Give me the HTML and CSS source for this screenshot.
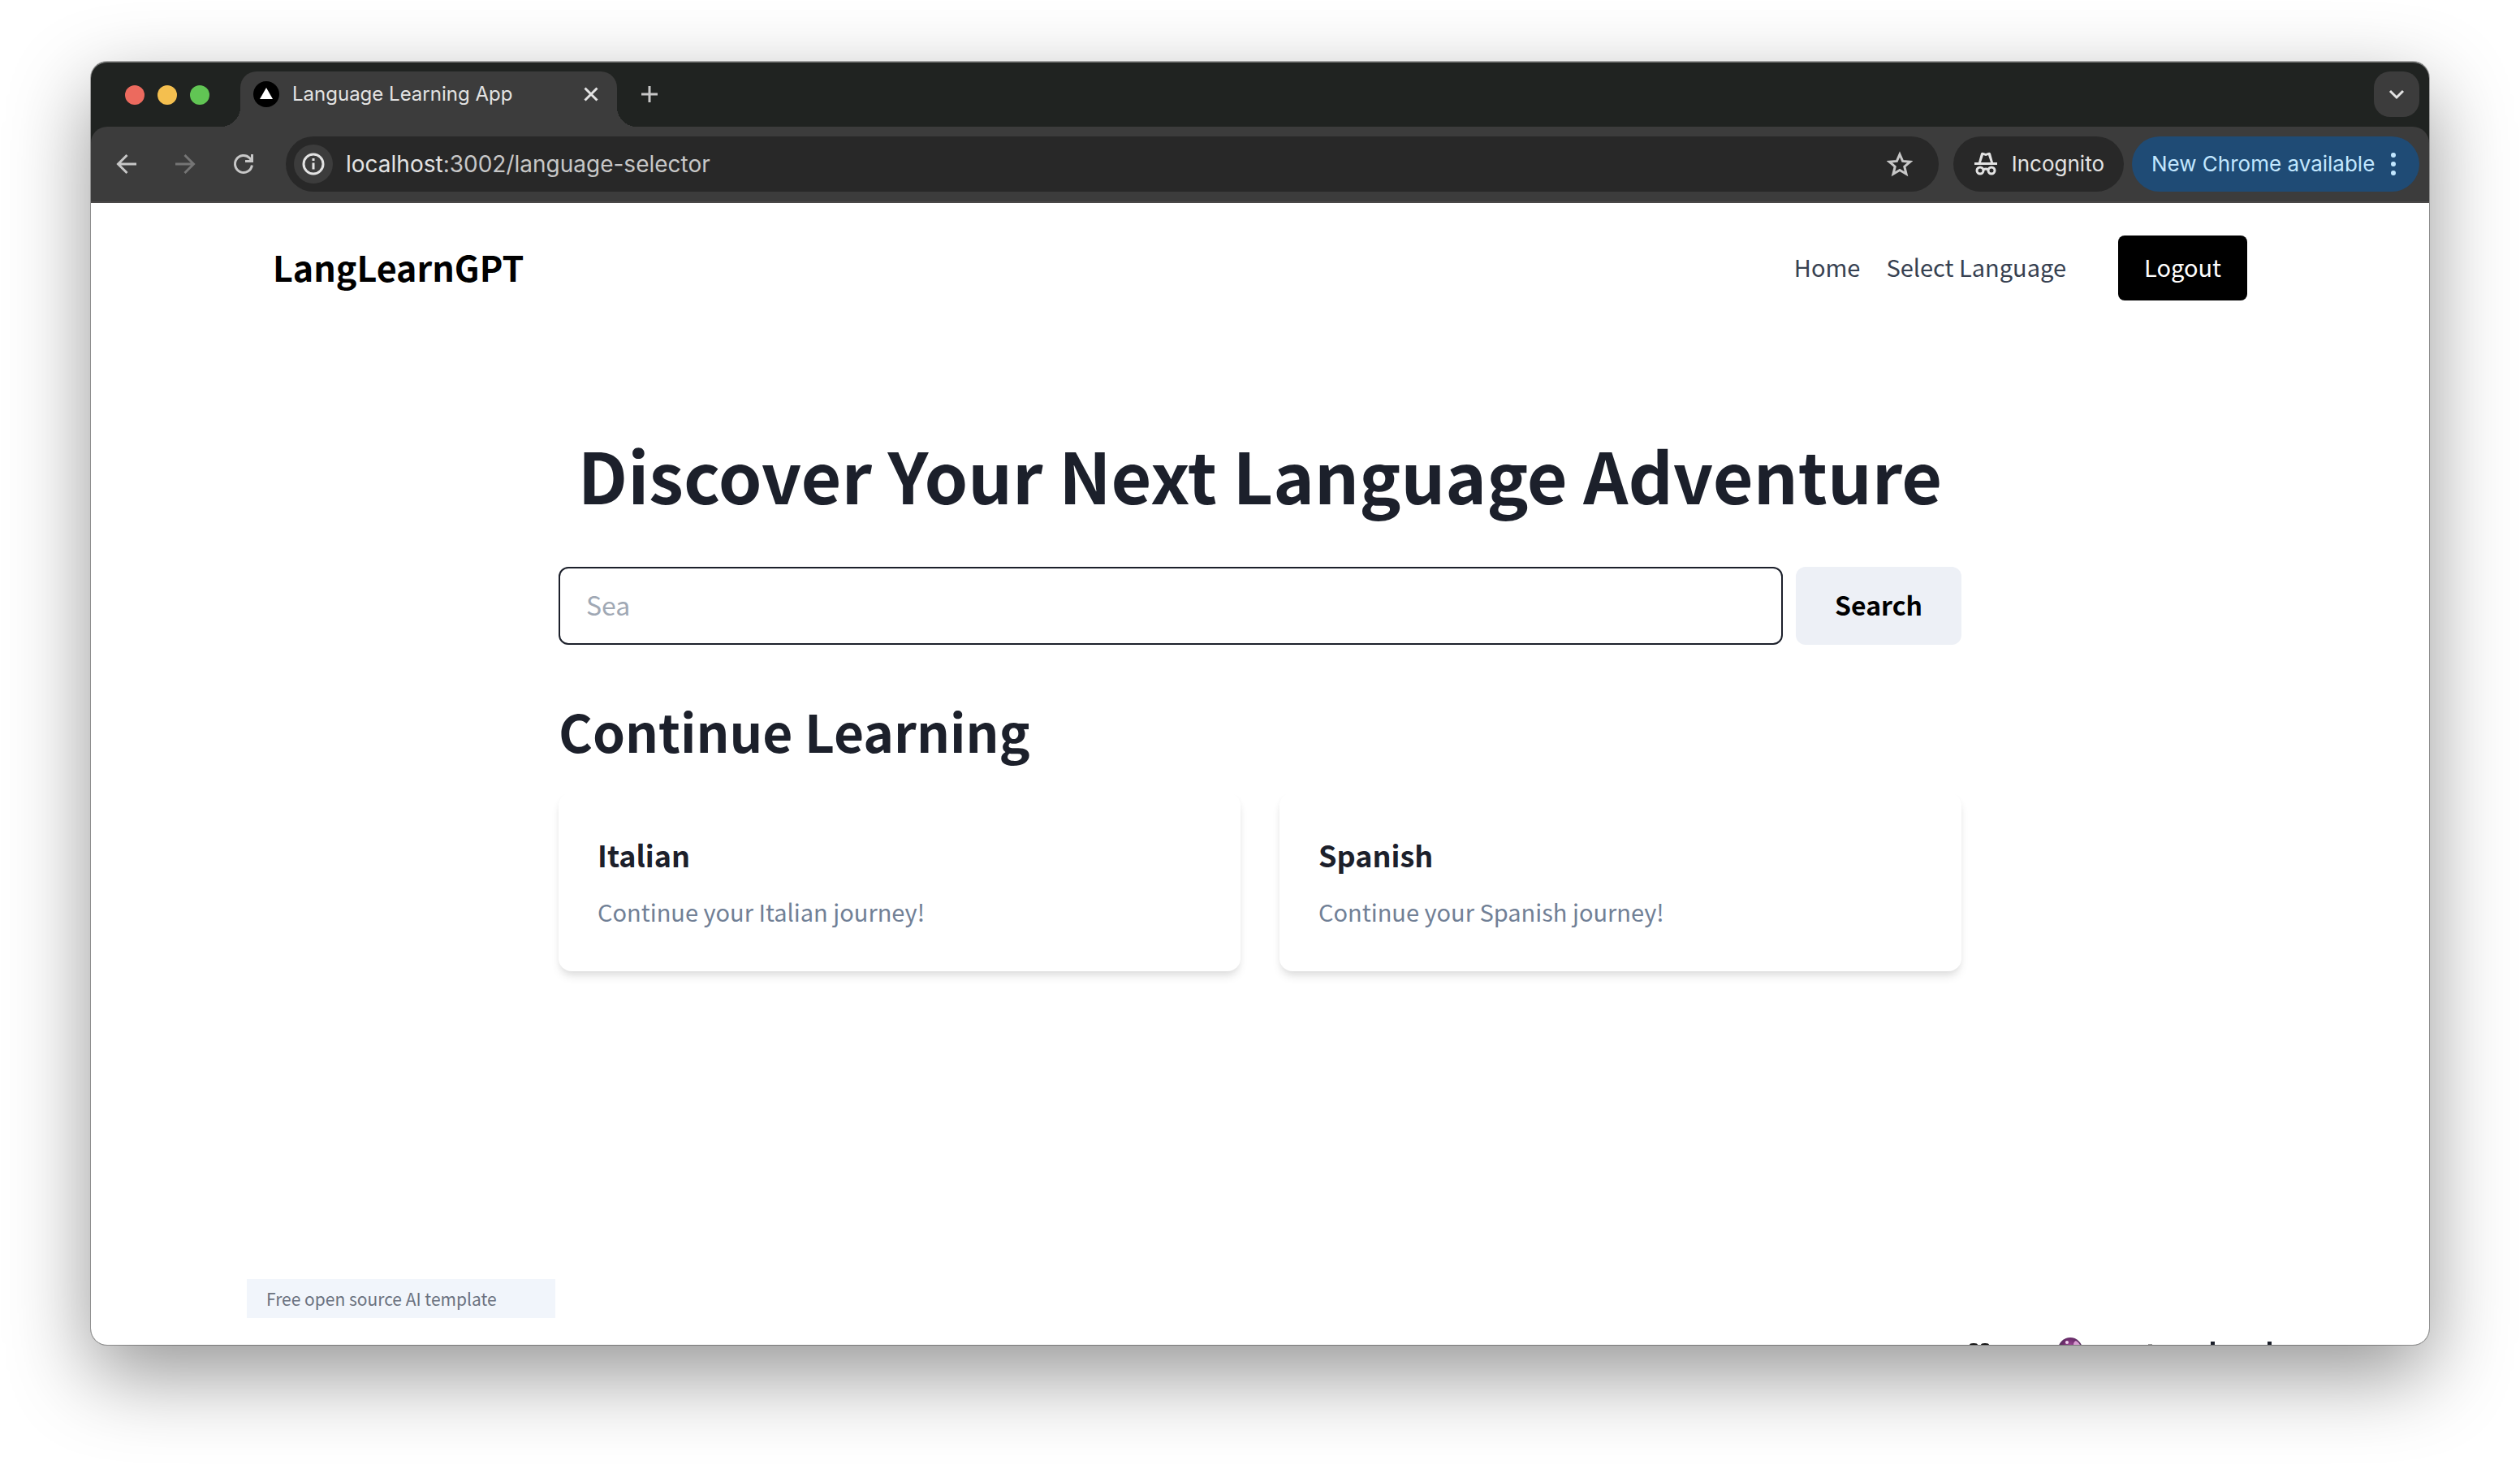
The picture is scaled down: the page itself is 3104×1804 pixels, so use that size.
FILE: index.html
```html
<!DOCTYPE html>
<html lang="en">
<head>
<meta charset="utf-8">
<title>Language Learning App</title>
<link rel="stylesheet" href="styles.css">
</head>
<body>
<div class="window">
  <div class="tab-strip">
    <div class="lights"><span class="light red"></span><span class="light yellow"></span><span class="light green"></span></div>
    <div class="tab">
      <svg class="favicon" viewBox="0 0 32 32" aria-hidden="true"><circle cx="16" cy="16" r="16" fill="#000"/><path d="M16 8l8 14H8z" fill="#fff"/></svg>
      <span class="tab-title">Language Learning App</span>
      <button class="icon-button" aria-label="Close tab"><svg class="icon-small" viewBox="0 0 24 24"><path d="M4.500 4.500l15 15M19.500 4.500l-15 15" stroke="#e3e3e3" stroke-width="3"/></svg></button>
    </div>
    <button class="icon-button new-tab" aria-label="New tab"><svg class="icon-small" viewBox="0 0 24 24"><path d="M12 2v20M2 12h20" stroke="#c7c7c7" stroke-width="3"/></svg></button>
    <button class="icon-button tab-search" aria-label="Search tabs"><svg class="icon-small" viewBox="0 0 24 24"><path d="M4 8l8 8 8-8" fill="none" stroke="#e3e3e3" stroke-width="3"/></svg></button>
  </div>
  <div class="toolbar">
    <div class="history">
      <button class="icon-button" aria-label="Back"><svg class="icon" viewBox="0 0 32 32"><path d="M28 16H6M16.500 5L5.500 16l11 11" fill="none" stroke="#c7c7c7" stroke-width="3"/></svg></button>
      <button class="icon-button" aria-label="Forward"><svg class="icon" viewBox="0 0 32 32"><path d="M4 16h22M15.500 5l11 11-11 11" fill="none" stroke="#757575" stroke-width="3"/></svg></button>
      <button class="icon-button" aria-label="Reload"><svg class="icon" viewBox="0 0 32 32"><path d="M26.400 17.500a10.500 10.500 0 1 1-3-9L26 11.500M26.500 4v8.500H18" fill="none" stroke="#c7c7c7" stroke-width="3"/></svg></button>
    </div>
    <div class="address">
      <button class="icon-button site-info" aria-label="Site information"><svg class="icon" viewBox="0 0 32 32"><circle cx="16" cy="16" r="12" fill="none" stroke="#e3e3e3" stroke-width="3"/><path d="M16 14.500v8M16 9v3" stroke="#e3e3e3" stroke-width="3"/></svg></button>
      <span class="url"><span class="host">localhost</span>:3002/language-selector</span>
      <button class="icon-button" aria-label="Bookmark"><svg class="icon" viewBox="0 0 32 32"><path d="M16 4l3.600 8.400 9.200.8-7 6 2.200 9L16 23.400 8 28.200l2.200-9-7-6 9.200-.8z" fill="none" stroke="#c7c7c7" stroke-width="3"/></svg></button>
    </div>
    <button class="pill incognito"><svg class="icon" viewBox="0 0 32 32"><path d="M2 14h28v3H2zM7 14L10 3q1-2 3-1l3 1 3-1q2-1 3 1l3 11h-3L19 5l-3 1-3-1-3 9z" fill="#e3e3e3"/><circle cx="9" cy="24" r="4" fill="none" stroke="#e3e3e3" stroke-width="3"/><circle cx="23" cy="24" r="4" fill="none" stroke="#e3e3e3" stroke-width="3"/><path d="M13 23q3-2 6 0" fill="none" stroke="#e3e3e3" stroke-width="3"/></svg>Incognito</button>
    <button class="pill update">New Chrome available<svg class="dots" viewBox="0 0 8 32"><circle cx="4" cy="5" r="3"/><circle cx="4" cy="16" r="3"/><circle cx="4" cy="27" r="3"/></svg></button>
  </div>
  <div class="page">
    <header class="site-header">
      <a class="brand" href="#">LangLearnGPT</a>
      <nav class="nav"><a href="#">Home</a><a href="#">Select Language</a></nav>
      <button class="logout">Logout</button>
    </header>
    <main class="main">
      <h1>Discover Your Next Language Adventure</h1>
      <form class="search">
        <input class="search-input" type="text" placeholder="Sea" aria-label="Search languages">
        <button class="search-button" type="button">Search</button>
      </form>
      <h2>Continue Learning</h2>
      <div class="cards">
        <a class="card" href="#"><h3>Italian</h3><p>Continue your Italian journey!</p></a>
        <a class="card" href="#"><h3>Spanish</h3><p>Continue your Spanish journey!</p></a>
      </div>
    </main>
    <footer class="site-footer">
      <span class="badge">Free open source AI template</span>
      <svg class="credits" viewBox="0 0 380 9" aria-hidden="true">
        <defs><radialGradient id="orb" cx=".5" cy=".35" r=".5"><stop offset="0" stop-color="#a24a9a"/><stop offset=".6" stop-color="#6d2c6c"/><stop offset="1" stop-color="#4c3558"/></radialGradient></defs>
        <ellipse cx="11" cy="9" rx="5" ry="2" fill="#111"/><ellipse cx="25" cy="9" rx="5" ry="2" fill="#111"/>
        <circle cx="130" cy="15" r="15" fill="url(#orb)"/><circle cx="126" cy="6" r="2" fill="#f3d6f0"/><path d="M134 9q0-4 3-5 4 2 5 5z" fill="#d79bd0"/>
        <path d="M226 8h5v1h-5z" fill="#999"/><path d="M303 5h5v4h-5zM373 5h5v4h-5z" fill="#1c202b"/>
      </svg>
    </footer>
  </div>
</div>
</body>
</html>
```
FILE: styles.css
```css
* { box-sizing: border-box; }
body { margin: 0; height: 100vh; padding: 76px 112px 148px; display: flex; background: #fff; font-family: "Noto Sans CJK SC", sans-serif; font-size: 29px; line-height: 48px; color: #1c202b; }
button, input { font: inherit; border: 0; padding: 0; }
a { color: inherit; text-decoration: none; }
h1, h2, h3, p { margin: 0; }
svg { display: block; }
.window { flex: 1; display: flex; flex-direction: column; min-width: 0; overflow: hidden; border-radius: 20px; background: #202321; box-shadow: 0 0 0 1px rgba(0,0,0,.3), 0 36px 100px rgba(0,0,0,.42); }
.tab-strip, .toolbar { font-family: Inter, sans-serif; display: flex; align-items: center; }
.tab-strip { height: 80px; padding: 12px 12px 0 42px; align-items: stretch; border-radius: 20px 20px 0 0; box-shadow: inset 0 1px rgba(255,255,255,.4); }
.lights { display: flex; gap: 16px; align-items: center; padding-bottom: 10px; }
.light { width: 24px; height: 24px; border-radius: 50%; }
.red { background: #ec6a5e; }
.yellow { background: #f4bf4f; }
.green { background: #61c554; }
.tab { position: relative; display: flex; align-items: center; gap: 16px; width: 464px; margin-left: 38px; padding: 0 20px 12px 16px; border-radius: 20px 20px 0 0; background: #3c3c3c; color: #e3e3e3; font-size: 24px; }
.tab::before, .tab::after { content: ""; position: absolute; bottom: 0; width: 24px; height: 24px; }
.tab::before { right: 100%; background: radial-gradient(circle at 0 0, transparent 24px, #3c3c3c 24px); }
.tab::after { left: 100%; background: radial-gradient(circle at 100% 0, transparent 24px, #3c3c3c 24px); }
.favicon { width: 32px; height: 32px; }
.tab-title { flex: 1; white-space: nowrap; }
.icon-button { display: flex; align-items: center; justify-content: center; background: none; }
.icon-small { width: 24px; height: 24px; }
.icon { width: 32px; height: 32px; }
.new-tab { margin: 0 auto 12px 28px; }
.tab-search { width: 56px; height: 56px; border-radius: 20px; background: #3c3c3c; }
.toolbar { height: 94px; padding: 10px 12px; border-radius: 20px 20px 0 0; border-bottom: 2px solid #4a4848; background: #3c3c3c; font-size: 26px; }
.history { display: flex; gap: 40px; padding: 0 36px 0 16px; }
.address { flex: 1; display: flex; align-items: center; height: 68px; padding: 0 32px 0 10px; border-radius: 34px; background: #282828; }
.site-info { width: 48px; height: 48px; border-radius: 50%; background: #3c3c3c; }
.url { flex: 1; margin-left: 16px; color: #c7c7c7; font-size: 28px; }
.host { color: #e3e3e3; }
.pill { display: flex; align-items: center; justify-content: space-between; height: 68px; border-radius: 34px; }
.incognito { width: 210px; margin: 0 10px 0 18px; padding: 0 24px; background: #282828; color: #e3e3e3; }
.update { width: 354px; padding: 0 28px 0 24px; background: #1f4b75; color: #c2e7ff; }
.dots { width: 8px; height: 32px; fill: #c2e7ff; }
.page { flex: 1; min-height: 0; display: flex; flex-direction: column; background: #fff; overflow: hidden; }
.site-header { width: 100%; max-width: 2560px; margin: 0 auto; padding: 40px 64px; display: flex; align-items: center; }
.brand { margin-right: auto; padding-bottom: 4px; color: #000; font-size: 43px; font-weight: 700; }
.nav { display: flex; gap: 32px; padding-bottom: 4px; color: #374151; }
.logout { height: 80px; margin-left: 64px; padding: 0 32px 4px; border-radius: 8px; background: #000; color: #fff; }
.main { width: 60%; margin: 0 auto; padding-top: 114px; }
h1 { font-size: 86px; line-height: 120px; font-weight: 700; text-align: center; }
.search { display: flex; gap: 16px; margin-top: 54px; font-size: 32px; }
.search-input { flex: 1; height: 96px; padding: 0 32px 4px; border: 2px solid #1c202b; border-radius: 12px; }
.search-input::placeholder { color: #a0a8b4; }
.search-button { height: 96px; padding: 0 48px 4px; border-radius: 12px; background: #edf0f6; color: #000; font-weight: 700; }
h2 { margin: 62px 0 34px; font-size: 64px; line-height: 86px; font-weight: 700; }
.cards { display: grid; grid-template-columns: 1fr 1fr; gap: 48px; }
.card { padding: 48px; border-radius: 16px; background: #fff; box-shadow: 0 8px 12px -2px rgba(0,0,0,.1), 0 4px 8px -2px rgba(0,0,0,.06); }
h3 { font-size: 36px; line-height: 56px; font-weight: 700; margin-bottom: 16px; }
.card p { line-height: 52px; color: #718096; }
.site-footer { display: flex; justify-content: space-between; align-items: flex-end; margin-top: auto; padding: 0 192px; }
.badge { width: 380px; margin-bottom: 33px; padding: 0 24px; background: #f1f5fb; color: #6b7280; font-size: 21px; }
.credits { width: 380px; height: 9px; }
```
